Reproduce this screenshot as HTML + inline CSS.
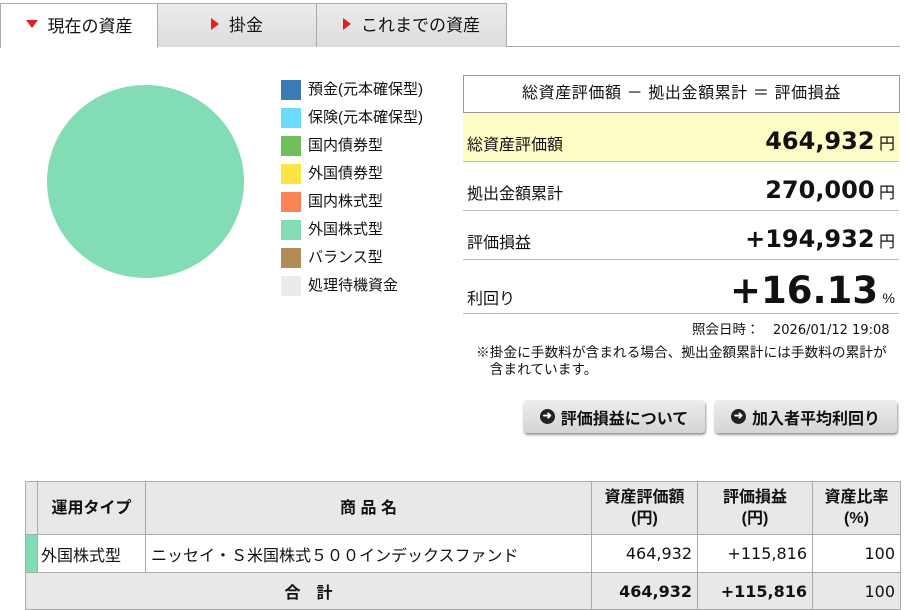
<!DOCTYPE html>
<html><head><meta charset="utf-8"><style>
*{margin:0;padding:0;box-sizing:border-box}
body{width:905px;height:609px;overflow:hidden;background:#fff;font-family:"Liberation Sans","Noto Sans CJK JP",sans-serif;color:#111;position:relative}
.a{position:absolute}
.n{font-family:"DejaVu Sans","Noto Sans CJK JP",sans-serif}
.tab{position:absolute;top:3px;height:44px;border:1px solid #aaa;border-bottom:none;background:linear-gradient(#ececec,#dcdcdc);font-size:17px;display:flex;align-items:center;justify-content:center;padding-bottom:4px}
.tri{display:inline-block;width:0;height:0;border-top:6px solid transparent;border-bottom:6px solid transparent;border-left:8px solid #e02020;margin-right:10px}
.trd{display:inline-block;width:0;height:0;border-left:6px solid transparent;border-right:6px solid transparent;border-top:8px solid #e02020;margin-right:10px}
.lg{position:absolute;left:281px;width:20px;height:20px}
.lt{position:absolute;left:308px;font-size:15px;line-height:20px}
.row{position:absolute;left:463px;width:436px;border-bottom:1px solid #bbb;font-size:16px}
.row .l{position:absolute;left:4px;bottom:6px}
.row .v{position:absolute;right:4px;bottom:6px;font-weight:bold;white-space:nowrap}
.btn{position:absolute;top:400px;height:33px;background:linear-gradient(#eee,#d4d4d4);border-radius:4px;box-shadow:1px 2px 2px #999;font-weight:bold;font-size:16px;display:flex;align-items:center;justify-content:center}
.ci{display:inline-block;width:15px;height:15px;border-radius:50%;background:#222;color:#fff;font-size:11px;line-height:15px;text-align:center;margin-right:6px}
table{position:absolute;left:25px;top:481px;border-collapse:collapse;font-size:16px}
td{border:1px solid #aaa;padding:0 5px}
.h td{background:#e8e8e8;font-weight:bold;text-align:center;line-height:21px}
</style></head><body>
<div class="a" style="left:157px;top:46px;width:743px;height:1px;background:#aaa"></div>
<div class="tab" style="left:0;width:158px;background:#fff;height:45px"><span class="trd"></span>現在の資産</div>
<div class="tab" style="left:157px;width:160px"><span class="tri"></span>掛金</div>
<div class="tab" style="left:316px;width:191px"><span class="tri"></span>これまでの資産</div>

<div class="a" style="left:47px;top:85px;width:197px;height:193px;border-radius:50%;background:#82dcb4"></div>

<div class="lg" style="top:80px;background:#3d79b7"></div><div class="lt" style="top:80px">預金(元本確保型)</div>
<div class="lg" style="top:108px;background:#6cdcfc"></div><div class="lt" style="top:108px">保険(元本確保型)</div>
<div class="lg" style="top:136px;background:#70c05a"></div><div class="lt" style="top:136px">国内債券型</div>
<div class="lg" style="top:164px;background:#fce444"></div><div class="lt" style="top:164px">外国債券型</div>
<div class="lg" style="top:192px;background:#fe8458"></div><div class="lt" style="top:192px">国内株式型</div>
<div class="lg" style="top:220px;background:#82dcb4"></div><div class="lt" style="top:220px">外国株式型</div>
<div class="lg" style="top:248px;background:#b28c56"></div><div class="lt" style="top:248px">バランス型</div>
<div class="lg" style="top:276px;background:#ebebeb"></div><div class="lt" style="top:276px">処理待機資金</div>

<div class="a" style="left:463px;top:75px;width:437px;height:38px;border:1px solid #999;font-size:16px;text-align:center;line-height:36px;letter-spacing:0.6px">総資産評価額 － 拠出金額累計 ＝ 評価損益</div>
<div class="row" style="top:113px;height:49px;background:#fdfbc6"><span class="l">総資産評価額</span><span class="v"><span class="n" style="font-size:24px">464,932</span> <span style="font-size:16px;font-weight:normal">円</span></span></div>
<div class="row" style="top:162px;height:49px"><span class="l">拠出金額累計</span><span class="v"><span class="n" style="font-size:24px">270,000</span> <span style="font-size:16px;font-weight:normal">円</span></span></div>
<div class="row" style="top:211px;height:49px"><span class="l">評価損益</span><span class="v"><span class="n" style="font-size:24px">+194,932</span> <span style="font-size:16px;font-weight:normal">円</span></span></div>
<div class="row" style="top:260px;height:54px"><span class="l" style="bottom:4px">利回り</span><span class="v" style="bottom:0"><span class="n" style="font-size:37px;line-height:44px">+16.13</span> <span style="font-size:14px;font-weight:normal">%</span></span></div>
<div class="a" style="left:692px;top:318px;font-size:13.5px">照会日時：　<span class="n" style="font-size:13px">2026/01/12 19:08</span></div>
<div class="a" style="left:476px;top:344px;font-size:13.7px;line-height:17px;width:429px;white-space:nowrap">※掛金に手数料が含まれる場合、拠出金額累計には手数料の累計が<br>　含まれています。</div>
<div class="btn" style="left:523px;width:182px"><span class="ci">➜</span>評価損益について</div>
<div class="btn" style="left:714px;width:183px"><span class="ci">➜</span>加入者平均利回り</div>

<table>
<tr class="h" style="height:53px"><td style="width:12px;padding:0"></td><td style="width:108px">運用タイプ</td><td style="width:446px">商 品 名</td><td style="width:106px">資産評価額<br>(円)</td><td style="width:115px">評価損益<br>(円)</td><td style="width:88px">資産比率<br>(%)</td></tr>
<tr style="height:38px"><td style="background:#82dcb4;padding:0"></td><td style="padding:0 3px">外国株式型</td><td>ニッセイ・Ｓ米国株式５００インデックスファンド</td><td class="n" style="text-align:right">464,932</td><td class="n" style="text-align:right">+115,816</td><td class="n" style="text-align:right">100</td></tr>
<tr style="height:37px;background:#e8e8e8"><td colspan="3" style="text-align:center;font-weight:bold">合　計</td><td class="n" style="text-align:right;font-weight:bold">464,932</td><td class="n" style="text-align:right;font-weight:bold">+115,816</td><td class="n" style="text-align:right">100</td></tr>
</table>
</body></html>
